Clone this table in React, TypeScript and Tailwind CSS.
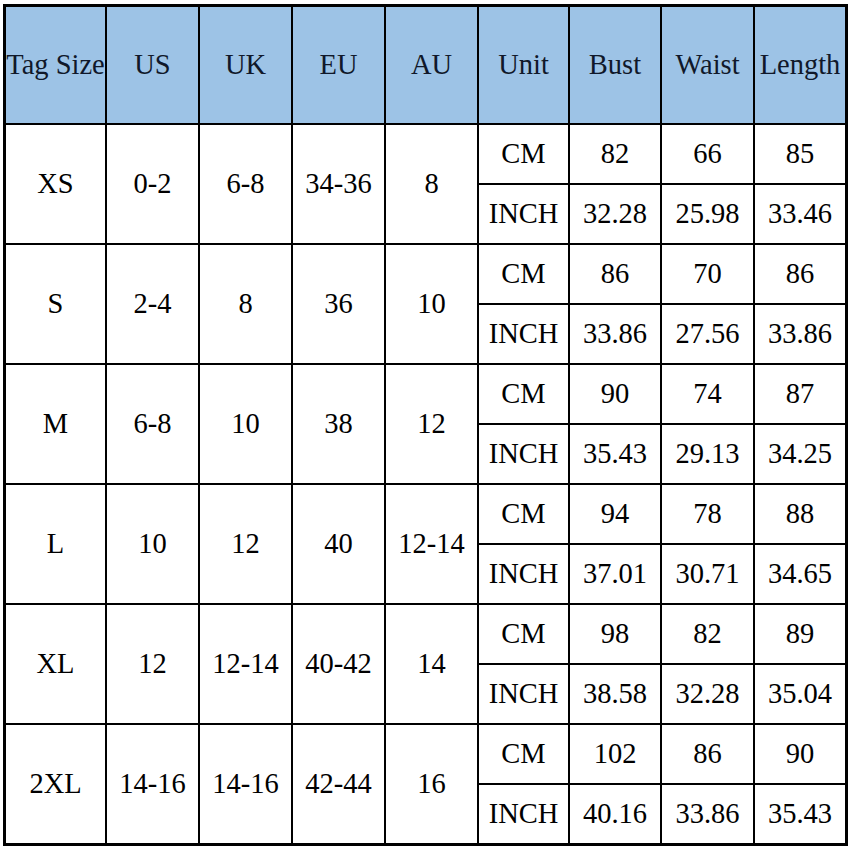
import React from 'react'

const HEADERS = ['Tag Size', 'US', 'UK', 'EU', 'AU', 'Unit', 'Bust', 'Waist', 'Length']

// size, us, uk, eu, au, cm[bust, waist, length], inch[...]
const ROWS: [string, string, string, string, string, string[], string[]][] = [
  ['XS', '0-2', '6-8', '34-36', '8', ['82', '66', '85'], ['32.28', '25.98', '33.46']],
  ['S', '2-4', '8', '36', '10', ['86', '70', '86'], ['33.86', '27.56', '33.86']],
  ['M', '6-8', '10', '38', '12', ['90', '74', '87'], ['35.43', '29.13', '34.25']],
  ['L', '10', '12', '40', '12-14', ['94', '78', '88'], ['37.01', '30.71', '34.65']],
  ['XL', '12', '12-14', '40-42', '14', ['98', '82', '89'], ['38.58', '32.28', '35.04']],
  ['2XL', '14-16', '14-16', '42-44', '16', ['102', '86', '90'], ['40.16', '33.86', '35.43']],
]

const cell = 'bg-white flex items-center justify-center whitespace-nowrap'

export default function App() {
  return (
    <div className="w-[850px] h-[850px] bg-white pl-[3px] pt-[4px]">
      <div
        className="grid w-[845px] bg-black p-[3px] gap-[2px] text-[28.5px] leading-none text-black"
        style={{ fontFamily: '"Liberation Serif", "Times New Roman", serif' }}
      >
        <div className="grid grid-cols-[99px_91px_91px_91px_91px_89px_90px_91px_90px] gap-[2px]">
          {HEADERS.map((h) => (
            <div key={h} className="bg-[#9dc3e6] h-[116px] flex items-center justify-center text-[#10182a] whitespace-nowrap">
              {h}
            </div>
          ))}
        </div>
        {ROWS.map(([size, us, uk, eu, au, cm, inch]) => (
          <div
            key={size}
            className="grid grid-cols-[99px_91px_91px_91px_91px_89px_90px_91px_90px] grid-rows-[58px_58px] gap-[2px]"
          >
            {[size, us, uk, eu, au].map((v, i) => (
              <div key={i} className={`${cell} row-span-2`}>
                {v}
              </div>
            ))}
            <div className={cell}>CM</div>
            {cm.map((v, i) => (
              <div key={'c' + i} className={cell}>
                {v}
              </div>
            ))}
            <div className={`${cell} col-start-6`}>INCH</div>
            {inch.map((v, i) => (
              <div key={'i' + i} className={cell}>
                {v}
              </div>
            ))}
          </div>
        ))}
      </div>
    </div>
  )
}
